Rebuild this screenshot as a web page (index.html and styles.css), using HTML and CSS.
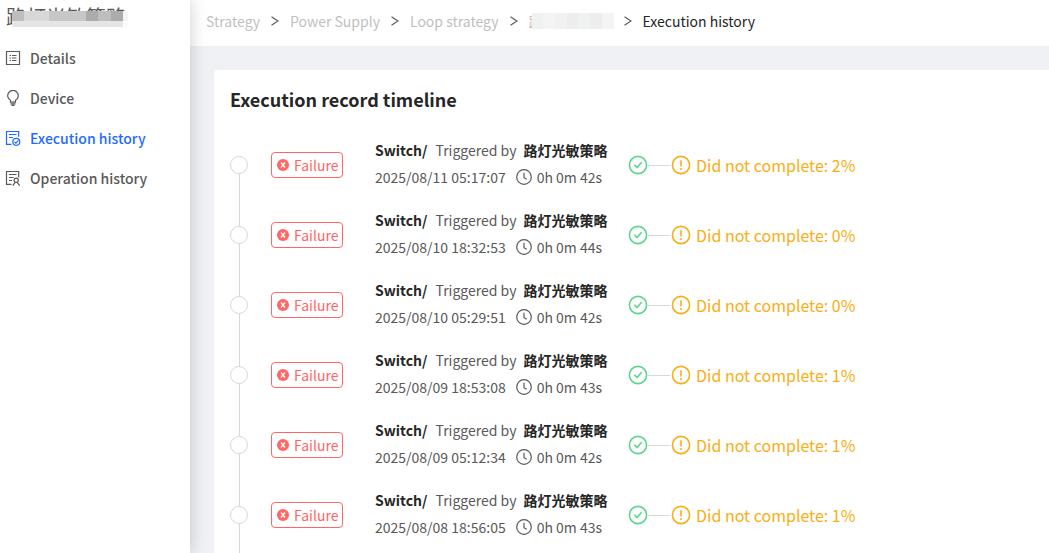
FILE: index.html
```html
<!DOCTYPE html>
<html lang="en">
<head>
<meta charset="utf-8">
<title>Execution history</title>
<link rel="stylesheet" href="styles.css">
</head>
<body>
<svg class="defs" aria-hidden="true">
  <symbol id="i-fail" viewBox="0 0 12 12"><circle cx="6" cy="6" r="6" fill="currentColor"/><path d="M4 3.500 8 8.500M8 3.500 4 8.500" stroke="#fff" stroke-width="1.300"/></symbol>
  <symbol id="i-clock" viewBox="0 0 16 16"><g fill="none" stroke="currentColor" stroke-width="1.200"><circle cx="8" cy="8" r="7.300"/><path d="M8 3.800V8.700L10.800 10.300"/></g></symbol>
  <symbol id="i-ok" viewBox="0 0 20 20"><g fill="none" stroke="currentColor" stroke-width="1.600"><circle cx="10" cy="10" r="8.600"/><path d="M6.300 9.700 9 12.500 13.600 7.200"/></g></symbol>
  <symbol id="i-warn" viewBox="0 0 20 20"><circle cx="10" cy="10" r="8.600" fill="none" stroke="currentColor" stroke-width="1.600"/><path d="M10 5.300v6.200" stroke="currentColor" stroke-width="1.600"/><circle cx="10" cy="14" r="1" fill="currentColor"/></symbol>
  <symbol id="i-chev" viewBox="0 0 8 10"><path d="M.5.7 7 5 .5 9.300" fill="none" stroke="currentColor" stroke-width="1.100"/></symbol>
</svg>
<div class="app">
  <aside class="sidebar">
    <div class="device-name">路灯光敏策略
      <div class="mosaic mosaic-dark">
        <i class="g1"></i><i class="g3"></i><i class="g3"></i><i class="g2"></i><i class="g2"></i><i class="g2"></i><i class="g0"></i><i class="g1"></i><i class="g0"></i><i class="edge"></i>
      </div>
    </div>
    <nav class="menu">
      <a href="#details"><svg viewBox="0 0 16 16"><g fill="none" stroke="currentColor"><path d="M1.500 1.500h13v13h-13z" stroke-width="1.200"/><path d="M4.500 5.500h1.500M4.500 8h1.500M4.500 10.500h1.500M7 5.500h4.500M7 8h4.500M7 10.500h4.500"/></g></svg>Details</a>
      <a href="#device"><svg viewBox="0 0 16 16"><g fill="none" stroke="currentColor" stroke-width="1.200"><path d="M5.500 12.200V10.300A5.300 5.300 0 1 1 10.500 10.300V12.200zM5.500 13.900h5M6.500 15.400h3"/></g></svg>Device</a>
      <a href="#execution" class="active" aria-current="page"><svg viewBox="0 0 16 16"><g fill="none" stroke="currentColor" stroke-width="1.200"><path d="M6.500 14.400h-5V1.500h12.200v5.200M4 4.500h7.500M4 7.500h4"/><circle cx="11.300" cy="11.800" r="3.500"/><path d="M9.500 11.800l1.400 1.300 2.500-2.700"/></g></svg>Execution history</a>
      <a href="#operation"><svg viewBox="0 0 16 16"><g fill="none" stroke="currentColor" stroke-width="1.200"><path d="M6.500 14.400h-5V1.500h12.200v6M4 4.500h7.500M4 7.500h4.500M4 10.500h3"/><circle cx="11.200" cy="10.300" r="2.100"/><path d="M7.700 15.600 10.200 12.400M12.200 12.400l2.500 3.200"/></g></svg>Operation history</a>
    </nav>
  </aside>
  <div class="content">
    <nav class="crumbs" aria-label="Breadcrumb">
      <a href="#s">Strategy</a><svg><use href="#i-chev"/></svg>
      <a href="#p">Power Supply</a><svg><use href="#i-chev"/></svg>
      <a href="#l">Loop strategy</a><svg><use href="#i-chev"/></svg>
      <a href="#n" class="masked">路灯光敏策略
        <span class="mosaic mosaic-light"><i class="l1"></i><i class="l2"></i><i class="l1"></i><i class="l0"></i><i class="l1"></i><i class="l0"></i><i class="l2"></i></span></a><svg><use href="#i-chev"/></svg>
      <span class="current">Execution history</span>
    </nav>
    <main class="panel">
      <h1>Execution record timeline</h1>
      <ol class="timeline">
        <li><span class="dot"></span><span class="tag"><svg><use href="#i-fail"/></svg>Failure</span>
          <div class="info"><p><b>Switch/</b><span>Triggered by</span><b>路灯光敏策略</b></p><p><time>2025/08/11 05:17:07</time><svg><use href="#i-clock"/></svg>0h 0m 42s</p></div>
          <div class="result"><svg class="ok"><use href="#i-ok"/></svg><svg class="warn"><use href="#i-warn"/></svg>Did not complete: 2%</div></li>
        <li><span class="dot"></span><span class="tag"><svg><use href="#i-fail"/></svg>Failure</span>
          <div class="info"><p><b>Switch/</b><span>Triggered by</span><b>路灯光敏策略</b></p><p><time>2025/08/10 18:32:53</time><svg><use href="#i-clock"/></svg>0h 0m 44s</p></div>
          <div class="result"><svg class="ok"><use href="#i-ok"/></svg><svg class="warn"><use href="#i-warn"/></svg>Did not complete: 0%</div></li>
        <li><span class="dot"></span><span class="tag"><svg><use href="#i-fail"/></svg>Failure</span>
          <div class="info"><p><b>Switch/</b><span>Triggered by</span><b>路灯光敏策略</b></p><p><time>2025/08/10 05:29:51</time><svg><use href="#i-clock"/></svg>0h 0m 42s</p></div>
          <div class="result"><svg class="ok"><use href="#i-ok"/></svg><svg class="warn"><use href="#i-warn"/></svg>Did not complete: 0%</div></li>
        <li><span class="dot"></span><span class="tag"><svg><use href="#i-fail"/></svg>Failure</span>
          <div class="info"><p><b>Switch/</b><span>Triggered by</span><b>路灯光敏策略</b></p><p><time>2025/08/09 18:53:08</time><svg><use href="#i-clock"/></svg>0h 0m 43s</p></div>
          <div class="result"><svg class="ok"><use href="#i-ok"/></svg><svg class="warn"><use href="#i-warn"/></svg>Did not complete: 1%</div></li>
        <li><span class="dot"></span><span class="tag"><svg><use href="#i-fail"/></svg>Failure</span>
          <div class="info"><p><b>Switch/</b><span>Triggered by</span><b>路灯光敏策略</b></p><p><time>2025/08/09 05:12:34</time><svg><use href="#i-clock"/></svg>0h 0m 42s</p></div>
          <div class="result"><svg class="ok"><use href="#i-ok"/></svg><svg class="warn"><use href="#i-warn"/></svg>Did not complete: 1%</div></li>
        <li><span class="dot"></span><span class="tag"><svg><use href="#i-fail"/></svg>Failure</span>
          <div class="info"><p><b>Switch/</b><span>Triggered by</span><b>路灯光敏策略</b></p><p><time>2025/08/08 18:56:05</time><svg><use href="#i-clock"/></svg>0h 0m 43s</p></div>
          <div class="result"><svg class="ok"><use href="#i-ok"/></svg><svg class="warn"><use href="#i-warn"/></svg>Did not complete: 1%</div></li>
      </ol>
    </main>
  </div>
</div>
</body>
</html>
```
FILE: styles.css
```css
* { box-sizing: border-box; }
body {
  margin: 0;
  font: 14px/20px "Noto Sans CJK SC", sans-serif;
  color: #595959;
  background: #f0f1f5;
}
.defs { display: none; }
a { color: inherit; text-decoration: none; }
svg { flex: none; }
.app { display: flex; height: 100vh; overflow: hidden; }

.sidebar {
  position: relative;
  z-index: 1;
  flex: none;
  width: 190px;
  background: #fff;
  box-shadow: 0 0 16px rgba(0, 0, 0, 0.2);
}
.device-name {
  position: relative;
  height: 38px;
  padding-left: 6px;
  font-size: 20px;
  line-height: 34px;
}
.menu a {
  display: flex;
  align-items: center;
  gap: 9px;
  height: 40px;
  padding-left: 5px;
  font-weight: 500;
}
.menu svg { width: 16px; height: 16px; }
.menu .active { color: #1f6bff; }

.mosaic { position: absolute; display: flex; }
.mosaic i { flex: 1; }
.mosaic-dark { left: 12px; top: 11px; width: 116px; height: 16px; }
.mosaic-dark i { border-bottom: 6px solid #e5e5e5; }
.mosaic-dark .edge { flex: none; width: 5px; background: #f5f5f5; border-color: #fafafa; }
.g0 { background: #acacac; }
.g1 { background: #bebebe; }
.g2 { background: #c7c7c7; }
.g3 { background: #d8d8d8; }
.mosaic-light { left: 3px; top: 2px; width: 82px; height: 16px; }
.l0 { background: #ededed; }
.l1 { background: #f0f1f1; }
.l2 { background: #f4f4f4; }

.content { display: flex; flex-direction: column; flex: 1; min-width: 0; }
.crumbs {
  display: flex;
  align-items: center;
  gap: 11px;
  flex: none;
  height: 46px;
  padding: 0 16px 5px;
  background: #fff;
  color: #bfbfbf;
  white-space: nowrap;
}
.crumbs svg { width: 8px; height: 10px; color: #595959; }
.crumbs .masked { position: relative; }
.crumbs .current { color: #262626; }

.panel {
  flex: 1 0 auto;
  margin: 24px 0 0 24px;
  padding: 15px 16px 0;
  background: #fff;
  border-radius: 4px 0 0 0;
}
h1 { margin: 0 0 17px; font-size: 18px; line-height: 28px; font-weight: 700; color: #262626; }
.timeline { margin: 0; padding: 0; list-style: none; }
.timeline li { position: relative; display: flex; align-items: center; height: 70px; white-space: nowrap; }
.timeline li::before {
  content: "";
  position: absolute;
  left: 9px;
  top: 35px;
  height: 70px;
  border-left: 1px solid #d9d9d9;
}
.dot {
  z-index: 1;
  width: 18px;
  height: 18px;
  border: 1px solid #d9d9d9;
  border-radius: 50%;
  background: #fff;
}
.tag {
  display: flex;
  align-items: center;
  gap: 5px;
  width: 72px;
  height: 26px;
  margin: 0 32px 0 23px;
  padding-left: 5px;
  border: 1px solid #ff6666;
  border-radius: 4px;
  color: #ff6666;
}
.tag svg { width: 12px; height: 12px; }
.info { width: 253px; padding-bottom: 3px; }
.info p { display: flex; align-items: center; margin: 0; height: 27px; }
.info b { font-weight: 700; color: #262626; }
.info span { margin: 0 7px 0 8px; }
.info svg { width: 16px; height: 16px; margin: 0 5px 0 10px; }
.result { position: relative; display: flex; align-items: center; color: #faad14; font-size: 16px; }
.result svg { width: 20px; height: 20px; }
.ok { color: #5bd68c; }
.result .warn { margin: 0 5px 0 23px; }
.result::before {
  content: "";
  position: absolute;
  left: 20px;
  top: 50%;
  width: 22px;
  border-top: 1px solid #d9d9d9;
}
```
